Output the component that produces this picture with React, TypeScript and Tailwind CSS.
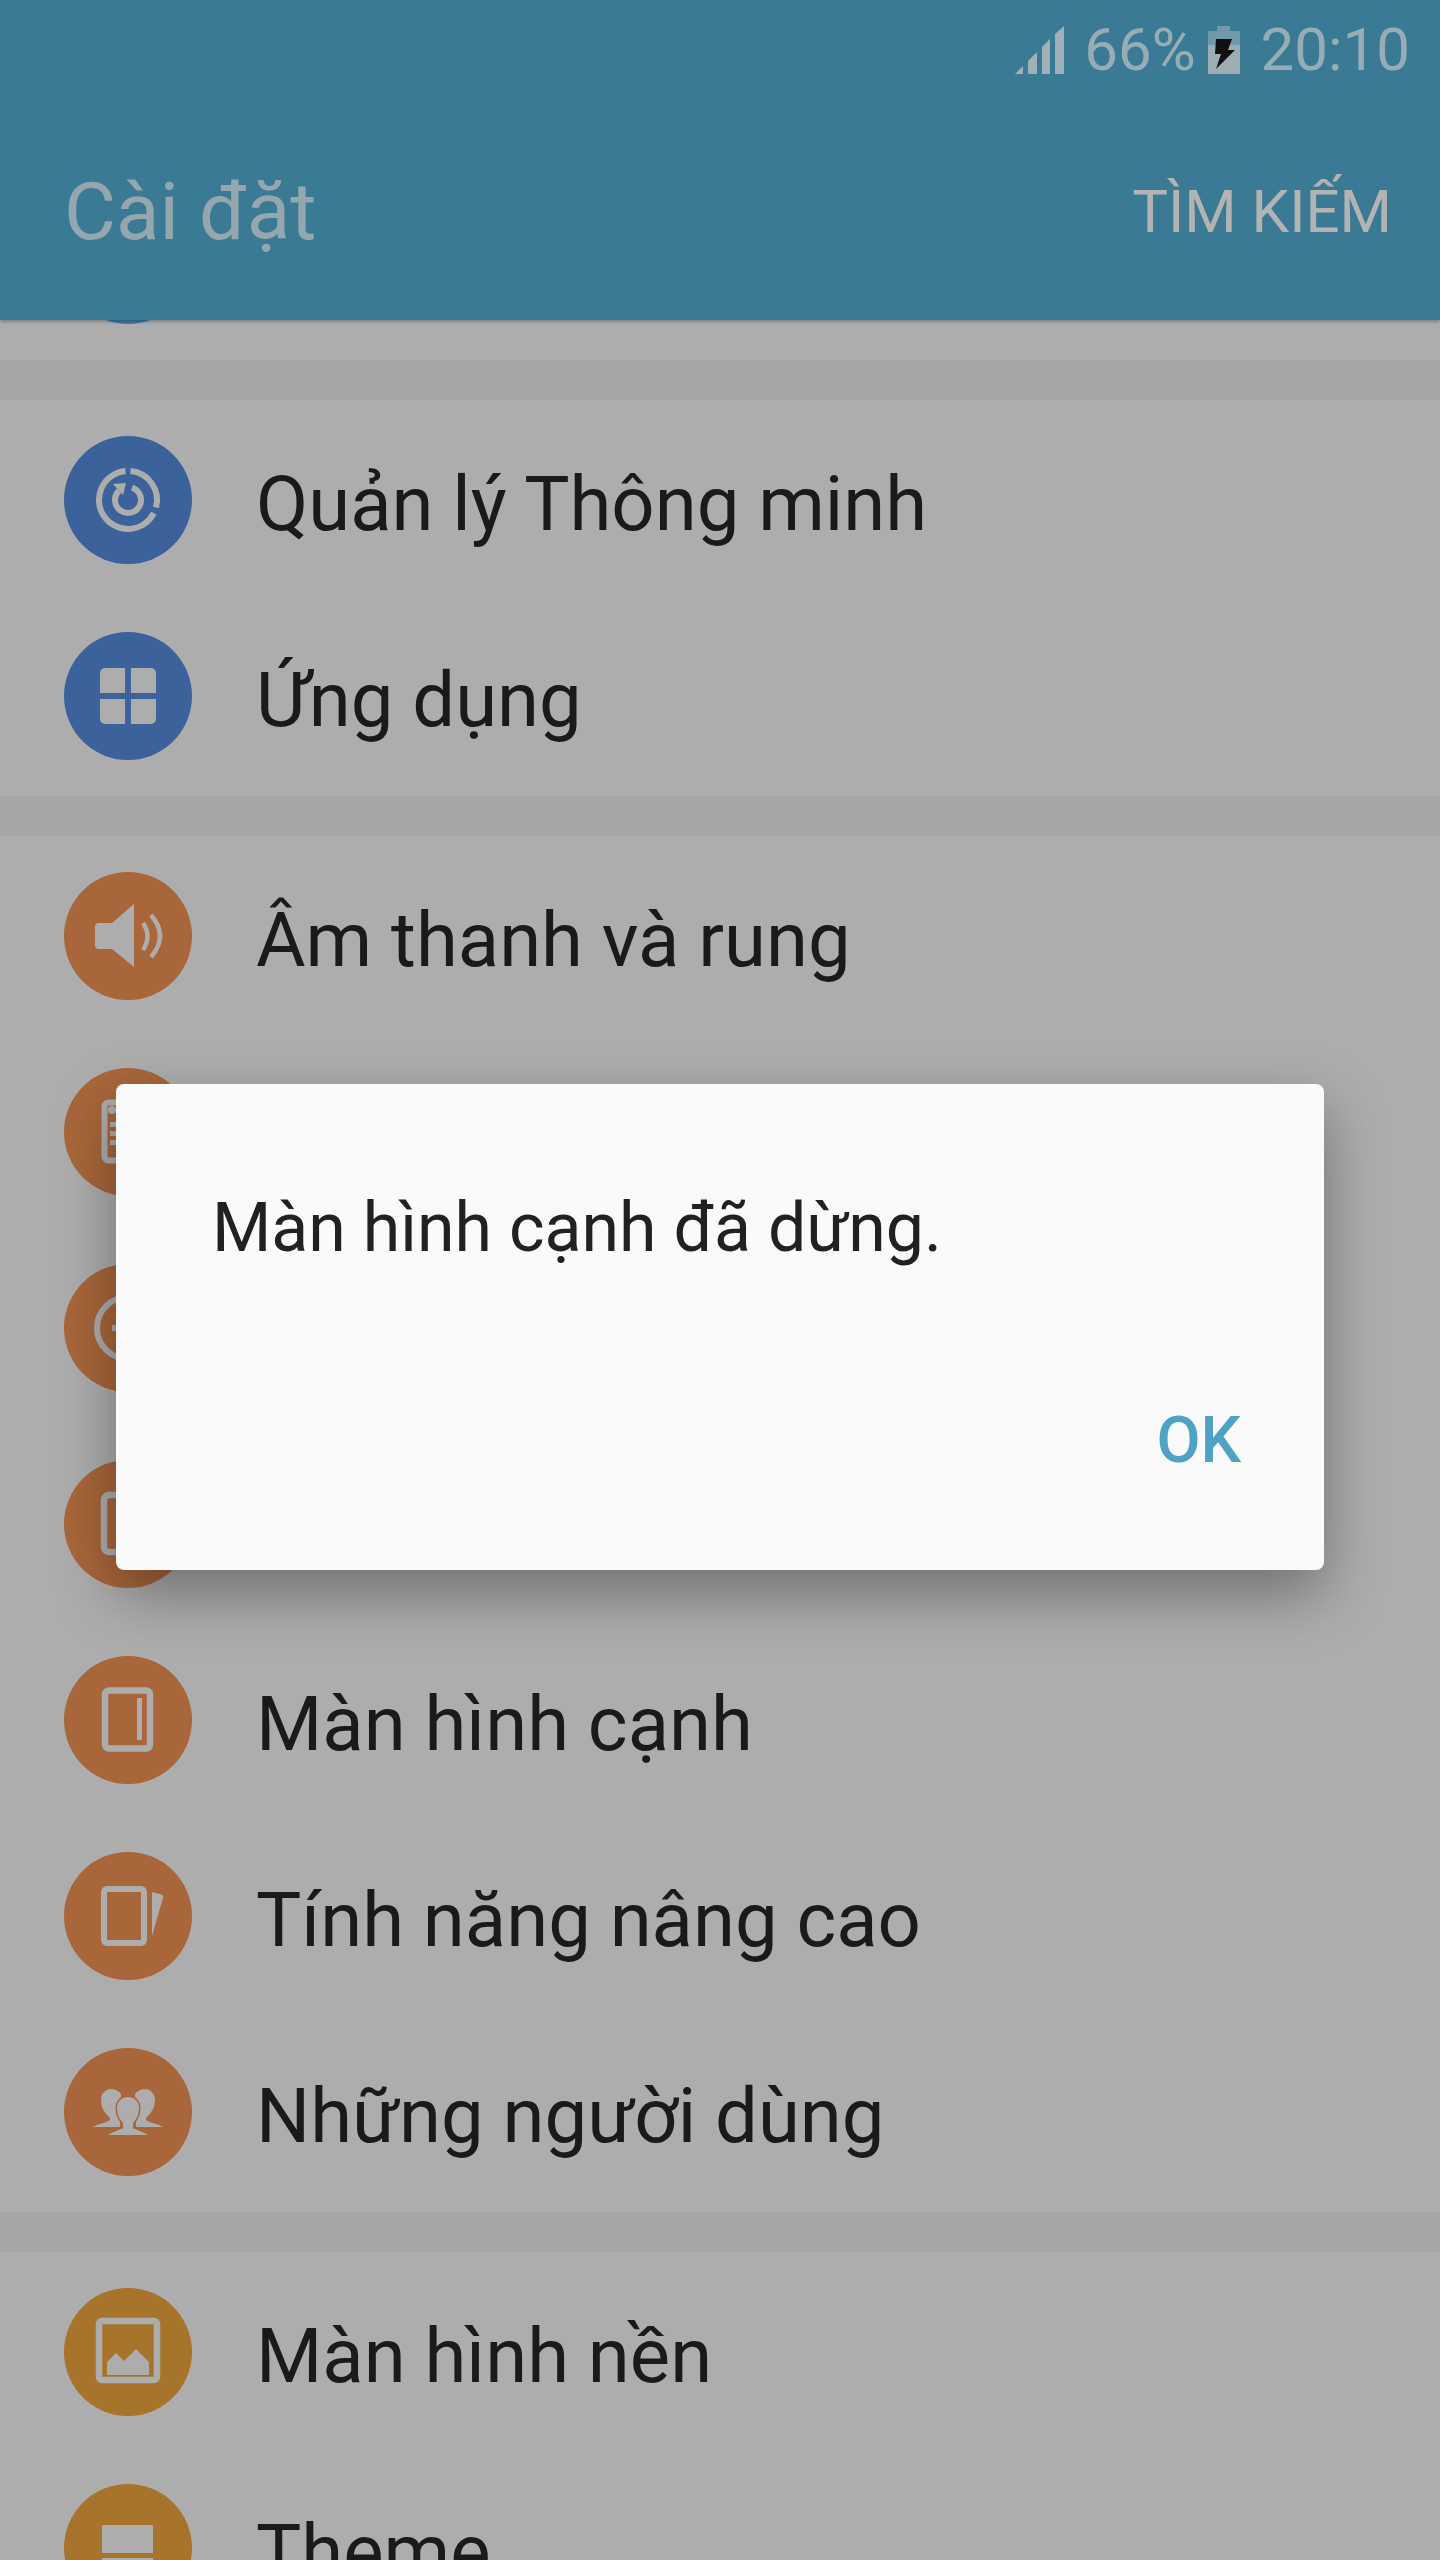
import React from "react";

const GREY = "#adadad";
const BLUE = "#3b629b";
const ORANGE = "#a8663a";
const GOLD = "#a6742a";

function Smart() {
  return (
    <g fill="none" stroke={GREY} strokeWidth={6}>
      <path d="M66.5 35.1A29 29 0 0 1 92 71.5" />
      <path d="M89.8 77.2A29 29 0 1 1 61.5 35.1" />
      <path d="M68 51.6A13 13 0 1 1 55 54.6" />
      <path d="M49 48L62 47L59 59Z" fill={GREY} stroke="none" />
    </g>
  );
}
function Apps() {
  return (
    <g>
      <rect x={36} y={36} width={56} height={56} rx={5} fill={GREY} />
      <rect x={61} y={36} width={6} height={56} fill={BLUE} />
      <rect x={36} y={61} width={56} height={6} fill={BLUE} />
    </g>
  );
}
function Speaker() {
  return (
    <g>
      <path d="M70 32L48 51H35a4 4 0 0 0-4 4V73a4 4 0 0 0 4 4H48L70 95Z" fill={GREY} />
      <path d="M79 51Q88 64 79 78" fill="none" stroke={GREY} strokeWidth={4.5} />
      <path d="M87 43Q105 64 87 85" fill="none" stroke={GREY} strokeWidth={4.5} />
    </g>
  );
}
function Note() {
  return (
    <g>
      <rect x={40.5} y={34.5} width={47} height={58} rx={4} fill="none" stroke={GREY} strokeWidth={6} />
      <circle cx={48} cy={42} r={4} fill={GREY} />
      <rect x={46} y={54} width={34} height={5} fill={GREY} />
      <rect x={46} y={63} width={34} height={5} fill={GREY} />
      <rect x={46} y={72} width={34} height={5} fill={GREY} />
    </g>
  );
}
function Dnd() {
  return (
    <g>
      <circle cx={64} cy={64} r={31} fill="none" stroke={GREY} strokeWidth={6} />
      <rect x={48} y={61} width={32} height={6} fill={GREY} />
    </g>
  );
}
function Display() {
  return <rect x={40} y={35} width={48} height={57} rx={5} fill="none" stroke={GREY} strokeWidth={6.5} />;
}
function Edge() {
  return (
    <g>
      <rect x={41} y={34.5} width={45} height={58} rx={4} fill="none" stroke={GREY} strokeWidth={6.5} />
      <rect x={73} y={42} width={5} height={42} fill={GREY} />
    </g>
  );
}
function Advanced() {
  return (
    <g>
      <rect x={40} y={37} width={40} height={54} rx={3} fill="none" stroke={GREY} strokeWidth={6} />
      <path d="M88 40L96 42Q100 43 99 46L88 84Z" fill={GREY} />
    </g>
  );
}
function Users() {
  return (
    <g fill={GREY}>
      <path d="M29 79C34 76 42 75 46 72L46 70C41 65 37 60 37 52C37 45 42 41 47 41C51 41 55 43 57 46L56 79Z" />
      <path d="M99 79C94 76 86 75 82 72L82 70C87 65 91 60 91 52C91 45 86 41 81 41C77 41 73 43 71 46L72 79Z" />
      <path
        d="M44 87C48 84 56 82 59 80L59 75C55 71 53 66 53 60C53 53 58 49 64 49C70 49 75 53 75 60C75 66 73 71 69 75L69 80C72 82 80 84 84 87Z"
        stroke={ORANGE}
        strokeWidth={3}
        paintOrder="stroke"
      />
    </g>
  );
}
function Wallpaper() {
  return (
    <g>
      <rect x={35} y={33} width={58} height={59} rx={3} fill="none" stroke={GREY} strokeWidth={6.5} />
      <path d="M43 74L52 65L60 73L72 61L85 74V87H43Z" fill={GREY} />
    </g>
  );
}
function Theme() {
  return (
    <g fill={GREY}>
      <rect x={38} y={41} width={51} height={28} />
      <rect x={38} y={74} width={51} height={14} />
    </g>
  );
}

function Row({ color, label, icon }: { color: string; label: string; icon: React.ReactNode }) {
  return (
    <div className="flex h-[196px] items-center gap-[64px] pl-[64px]">
      <div className="h-[128px] w-[128px] shrink-0 rounded-full" style={{ backgroundColor: color }}>
        <svg viewBox="0 0 128 128" className="h-[128px] w-[128px]">
          {icon}
        </svg>
      </div>
      <span className="pt-[7px] text-[76px] leading-none text-[#1a1a1a]">{label}</span>
    </div>
  );
}

function Section({ children }: { children: React.ReactNode }) {
  return <section className="bg-[#adadad] py-[2px]">{children}</section>;
}

function StatusBar() {
  return (
    <div className="flex h-[100px] items-center justify-end pr-[30px] text-[60px] leading-none text-[#97adb6]">
      <svg viewBox="0 0 49 48" className="mr-[20px] h-[48px] w-[49px]" fill="#9eb1b9">
        <path d="M0 48L8 40V48Z" />
        <path d="M13 35L22 26V48H13Z" />
        <path d="M27 21L35 13V48H27Z" />
        <path d="M40 8L49 0V48H40Z" />
      </svg>
      <span>66%</span>
      <svg viewBox="0 0 32 48" className="ml-[12px] mr-[21px] h-[48px] w-[32px]">
        <path d="M9 0H22V5H32V19H0V5H9Z" fill="#7199ab" />
        <rect y={19} width={32} height={29} fill="#9eadb2" />
        <path d="M8 13H24L20 24H27L8 43L13 28H7Z" fill="#111111" />
      </svg>
      <span>20:10</span>
    </div>
  );
}

export default function App() {
  return (
    <div className="relative h-[2560px] w-[1440px] overflow-hidden bg-[#adadad] [font-family:Roboto,sans-serif]">
      <header className="relative z-10 h-[320px] bg-[#3a7a94] shadow-[0_2px_3px_rgba(0,0,0,0.25)]">
        <StatusBar />
        <div className="flex items-center justify-between pl-[64px] pr-[48px] pt-[52px]">
          <span className="text-[80px] leading-[120px] text-[#94a6ae]">Cài đặt</span>
          <span className="text-[60px] leading-[120px] text-[#b3b3b3]">TÌM KIẾM</span>
        </div>
      </header>

      <div className="h-[40px] overflow-hidden pl-[64px]">
        <div className="-mt-[124px] h-[128px] w-[128px] rounded-full bg-[#3a7ca8]" />
      </div>
      <div className="h-[40px] bg-[#a6a6a6]" />
      <Section>
        <Row color={BLUE} label="Quản lý Thông minh" icon={<Smart />} />
        <Row color={BLUE} label="Ứng dụng" icon={<Apps />} />
      </Section>
      <div className="h-[40px] bg-[#a6a6a6]" />
      <Section>
        <Row color={ORANGE} label="Âm thanh và rung" icon={<Speaker />} />
        <Row color={ORANGE} label="Thông báo" icon={<Note />} />
        <Row color={ORANGE} label="Không làm phiền" icon={<Dnd />} />
        <Row color={ORANGE} label="Màn hình" icon={<Display />} />
        <Row color={ORANGE} label="Màn hình cạnh" icon={<Edge />} />
        <Row color={ORANGE} label="Tính năng nâng cao" icon={<Advanced />} />
        <Row color={ORANGE} label="Những người dùng" icon={<Users />} />
      </Section>
      <div className="h-[40px] bg-[#a6a6a6]" />
      <Section>
        <Row color={GOLD} label="Màn hình nền" icon={<Wallpaper />} />
        <Row color={GOLD} label="Theme" icon={<Theme />} />
      </Section>

      <div className="absolute left-[116px] top-[1084px] z-20 flex h-[486px] w-[1208px] flex-col justify-between rounded-[8px] bg-[#fafafa] pb-[97px] pl-[96px] pr-[83px] pt-[99px] shadow-[0_24px_60px_rgba(0,0,0,0.35)]">
        <p className="text-[68px] leading-[90px] text-[#212121]">Màn hình cạnh đã dừng.</p>
        <div className="text-right text-[64px] font-medium leading-none text-[#4ea2c3]">OK</div>
      </div>
    </div>
  );
}
